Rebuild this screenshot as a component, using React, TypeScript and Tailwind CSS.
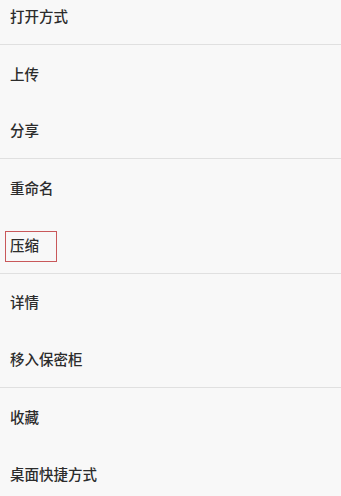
const groups: string[][] = [
  ["打开方式"],
  ["上传", "分享"],
  ["重命名", "压缩"],
  ["详情", "移入保密柜"],
  ["收藏", "桌面快捷方式"],
];

export default function App() {
  return (
    <div
      className="w-[341px] h-[496px] overflow-hidden bg-[#f8f8f8] text-[#2c2c2c]"
      style={{ fontFamily: '"Noto Sans CJK SC", "Noto Sans", sans-serif' }}
    >
      <div className="-mt-[12.4px]">
        {groups.map((g, gi) =>
          g.map((label, i) => {
            const last = i === g.length - 1 && gi < groups.length - 1;
            return (
              <div
                key={label}
                className={`h-[57.2px] flex items-center pl-[10px] text-[14.5px] font-medium ${
                  last ? "border-b border-[#e0e0e0]" : ""
                }`}
              >
                {label === "压缩" ? (
                  <span className="-ml-[5px] mt-[4px] flex items-center h-[31px] w-[52px] pl-[4px] pb-[3px] border border-[#c9585a]">
                    {label}
                  </span>
                ) : (
                  <span>{label}</span>
                )}
              </div>
            );
          })
        )}
      </div>
    </div>
  );
}
